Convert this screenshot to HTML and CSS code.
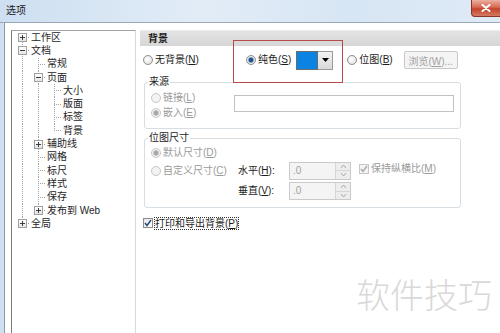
FILE: index.html
```html
<!DOCTYPE html>
<html>
  <head>
    <meta charset="utf-8">
    <title>选项</title>
    <link rel="stylesheet" href="styles.css">
  </head>
  <body>
    <div class="window">
      <!-- 標題列 -->
      <div class="titlebar">
        <span class="title">选项</span>
        <span class="close">
          <svg width="10" height="8" viewBox="0 0 10 8"><path d="M1.5 1 L8.5 7 M8.5 1 L1.5 7" stroke="#fff" stroke-width="2" stroke-linecap="round"/></svg>
        </span>
      </div>

      <div class="frame">
        <div class="client">
          <!-- 左邊的樹狀清單 -->
          <div class="tree">
            <div class="node"><i class="g f"><b class="box plus"></b></i><span>工作区</span></div>
            <div class="node"><i class="g t"><b class="box"></b></i><span>文档</span></div>
            <div class="node"><i class="g v"></i><i class="g t"></i><span>常规</span></div>
            <div class="node"><i class="g v"></i><i class="g t"><b class="box"></b></i><span>页面</span></div>
            <div class="node"><i class="g v"></i><i class="g v"></i><i class="g t"></i><span>大小</span></div>
            <div class="node"><i class="g v"></i><i class="g v"></i><i class="g t"></i><span>版面</span></div>
            <div class="node"><i class="g v"></i><i class="g v"></i><i class="g t"></i><span>标签</span></div>
            <div class="node"><i class="g v"></i><i class="g v"></i><i class="g l"></i><span>背景</span></div>
            <div class="node"><i class="g v"></i><i class="g t"><b class="box plus"></b></i><span>辅助线</span></div>
            <div class="node"><i class="g v"></i><i class="g t"></i><span>网格</span></div>
            <div class="node"><i class="g v"></i><i class="g t"></i><span>标尺</span></div>
            <div class="node"><i class="g v"></i><i class="g t"></i><span>样式</span></div>
            <div class="node"><i class="g v"></i><i class="g t"></i><span>保存</span></div>
            <div class="node"><i class="g v"></i><i class="g l"><b class="box plus"></b></i><span>发布到 Web</span></div>
            <div class="node"><i class="g l"><b class="box plus"></b></i><span>全局</span></div>
          </div>

          <!-- 右邊的設定頁 -->
          <div class="pane">
            <div class="pane-head">背景</div>

            <div class="top-row">
              <span class="opt"><i class="radio"></i><span>无背景(<u>N</u>)</span></span>
              <span class="opt solid"><i class="radio on"></i><span>纯色(<u>S</u>)</span></span>
              <span class="picker">
                <span class="swatch"></span>
                <span class="drop">
                  <svg width="7" height="4" viewBox="0 0 7 4"><path d="M0 0 H7 L3.5 4 Z" fill="#000"/></svg>
                </span>
              </span>
              <span class="opt bitmap"><i class="radio"></i><span>位图(<u>B</u>)</span></span>
              <span class="btn"><span>浏览(<u>W</u>)...</span></span>
            </div>

            <fieldset class="group source">
              <legend>来源</legend>
              <div class="source-body">
                <div class="source-opts">
                  <span class="opt dim"><i class="radio dis"></i><span>链接(<u>L</u>)</span></span>
                  <span class="opt dim"><i class="radio dis on"></i><span>嵌入(<u>E</u>)</span></span>
                </div>
                <span class="path"></span>
              </div>
            </fieldset>

            <fieldset class="group size">
              <legend>位图尺寸</legend>
              <div class="size-grid">
                <span class="opt dim"><i class="radio dis on"></i><span>默认尺寸(<u>D</u>)</span></span>
                <span></span><span></span><span></span>

                <span class="opt dim"><i class="radio dis"></i><span>自定义尺寸(<u>C</u>)</span></span>
                <span class="lbl">水平(<u>H</u>):</span>
                <span class="spin"><span class="val">.0</span><span class="arrows"><b><svg width="5" height="3" viewBox="0 0 5 3"><path d="M0 3 L2.5 0 L5 3" fill="none" stroke="#a8a8a8"/></svg></b><b><svg width="5" height="3" viewBox="0 0 5 3"><path d="M0 0 L2.5 3 L5 0" fill="none" stroke="#a8a8a8"/></svg></b></span></span>
                <span class="opt dim keep"><i class="check dis"><svg width="8" height="8" viewBox="0 0 8 8"><path d="M1 4 L3 6.5 L7 1" fill="none" stroke="#a5a5a5" stroke-width="1.3"/></svg></i><span>保持纵横比(<u>M</u>)</span></span>

                <span></span>
                <span class="lbl">垂直(<u>V</u>):</span>
                <span class="spin"><span class="val">.0</span><span class="arrows"><b><svg width="5" height="3" viewBox="0 0 5 3"><path d="M0 3 L2.5 0 L5 3" fill="none" stroke="#a8a8a8"/></svg></b><b><svg width="5" height="3" viewBox="0 0 5 3"><path d="M0 0 L2.5 3 L5 0" fill="none" stroke="#a8a8a8"/></svg></b></span></span>
                <span></span>
              </div>
            </fieldset>

            <div class="print">
              <i class="check"><svg width="8" height="8" viewBox="0 0 8 8"><path d="M1 4 L3 6.5 L7 1" fill="none" stroke="#23457a" stroke-width="1.4"/></svg></i>
              <span class="focus">打印和导出背景(<u>P</u>)</span>
            </div>
          </div>
        </div>
      </div>

      <!-- 標記框和浮水印 -->
      <div class="highlight"></div>
      <div class="mark">软件技巧</div>
    </div>
  </body>
</html>
```

FILE: styles.css
```css
/* 整體視窗 */
body {
  margin: 0;
  width: 500px;
  height: 333px;
  overflow: hidden;
  font-family: "Liberation Sans", "Noto Sans CJK SC", sans-serif;
  font-size: 10px;
  color: #1c1c1c;
}

u {
  text-decoration: underline;
  text-underline-offset: 1px;
}

.window {
  position: relative;
  width: 500px;
  height: 333px;
  display: flex;
  flex-direction: column;
  background: #cfe0f2;
}

/* 標題列 */
.titlebar {
  height: 22px;
  flex: none;
  display: flex;
  align-items: flex-start;
  background: linear-gradient(to right, #cddff1, #e2ecf7 40%, #d7e6f4 70%, #dfeaf6);
  border-bottom: 1px solid #9aa8b8;
}

.title {
  margin: 5px 0 0 6px;
  font-size: 10px;
  line-height: 12px;
  color: #1a1a1a;
}

.close {
  margin-left: auto;
  width: 28px;
  height: 16px;
  display: flex;
  align-items: center;
  justify-content: center;
  border: 1px solid #8a3527;
  border-top: 0;
  border-right: 0;
  border-radius: 0 0 0 4px;
  background: linear-gradient(#eab0a2, #d66a52 45%, #c2432a 55%, #d37a62);
}

.frame {
  flex: 1;
  display: flex;
  padding-left: 4px;
}

.client {
  flex: 1;
  display: flex;
  gap: 4px;
  padding: 7px 0 0 6px;
  background: #fff;
  border-left: 1px solid #8e9aa8;
}

/* 樹狀清單 */
.tree {
  width: 121px;
  flex: none;
  padding-left: 2px;
  background: #fff;
  border: 1px solid #a3a3a3;
  border-left-color: #7e7e7e;
  border-right-color: #dadada;
  border-bottom: 0;
}

.node {
  height: 13.3px;
  display: flex;
  align-items: center;
  line-height: 12px;
  white-space: nowrap;
}

.node span {
  padding-left: 1px;
  color: #262626;
}

.g {
  width: 16px;
  height: 100%;
  flex: none;
  display: flex;
  align-items: center;
  justify-content: center;
  background-repeat: no-repeat;
}

.g.v {
  background-image: repeating-linear-gradient(to bottom, #a5a5a5 0 1px, transparent 1px 2px);
  background-size: 1px 100%;
  background-position: 8px 0;
}

.g.t {
  background-image:
    repeating-linear-gradient(to bottom, #a5a5a5 0 1px, transparent 1px 2px),
    repeating-linear-gradient(to right, #a5a5a5 0 1px, transparent 1px 2px);
  background-size: 1px 100%, 8px 1px;
  background-position: 8px 0, 8px 50%;
}

.g.l {
  background-image:
    repeating-linear-gradient(to bottom, #a5a5a5 0 1px, transparent 1px 2px),
    repeating-linear-gradient(to right, #a5a5a5 0 1px, transparent 1px 2px);
  background-size: 1px 50%, 8px 1px;
  background-position: 8px 0, 8px 50%;
}

.g.f {
  background-image:
    repeating-linear-gradient(to bottom, #a5a5a5 0 1px, transparent 1px 2px),
    repeating-linear-gradient(to right, #a5a5a5 0 1px, transparent 1px 2px);
  background-size: 1px 50%, 8px 1px;
  background-position: 8px 100%, 8px 50%;
}

.box {
  width: 9px;
  height: 9px;
  box-sizing: border-box;
  margin-left: 1px;
  border: 1px solid #a0a0a0;
  background:
    linear-gradient(#3b3b3b, #3b3b3b) center / 5px 1px no-repeat,
    linear-gradient(#fff, #e4e4e4);
}

.box.plus {
  background:
    linear-gradient(#3b3b3b, #3b3b3b) center / 5px 1px no-repeat,
    linear-gradient(#3b3b3b, #3b3b3b) center / 1px 5px no-repeat,
    linear-gradient(#fff, #e4e4e4);
}

/* 右邊的設定頁 */
.pane {
  flex: 1;
  display: flex;
  flex-direction: column;
  align-items: flex-start;
}

.pane-head {
  align-self: stretch;
  height: 16px;
  box-sizing: border-box;
  padding-left: 8px;
  line-height: 16px;
  font-weight: bold;
  background: linear-gradient(#e3e3e3, #d6d6d6);
  border-top: 1px solid #ececec;
}

.opt {
  display: flex;
  align-items: center;
  gap: 2px;
  white-space: nowrap;
  line-height: 12px;
}

.opt.dim {
  color: #9a9a9a;
}

.radio {
  width: 10px;
  height: 10px;
  box-sizing: border-box;
  flex: none;
  border: 1px solid #8d8d8d;
  border-radius: 50%;
  background: radial-gradient(circle at 40% 40%, #fff, #dadada);
}

.radio.on {
  background: radial-gradient(circle, #24548a 0 2px, #86abd0 2.6px, #ececec 3.4px);
}

.radio.dis {
  border-color: #c6c6c6;
  background: #f3f3f3;
}

.radio.dis.on {
  background: radial-gradient(circle, #a6a6a6 0 2px, #cfcfcf 2.6px, #f3f3f3 3.4px);
}

.check {
  width: 10px;
  height: 10px;
  box-sizing: border-box;
  flex: none;
  display: flex;
  align-items: center;
  justify-content: center;
  border: 1px solid #8d8d8d;
  background: linear-gradient(135deg, #e6e6e6, #fff);
}

.check.dis {
  border-color: #c6c6c6;
  background: #f4f4f4;
}

.top-row {
  height: 20px;
  margin-top: 4px;
  padding-left: 3px;
  display: flex;
  align-items: center;
}

.opt.solid {
  margin-left: 47px;
}

.picker {
  margin-left: 5px;
  display: flex;
  height: 19px;
}

.swatch {
  width: 22px;
  box-sizing: border-box;
  background: #0b83e2;
  border: 1px solid #6c6c6c;
}

.drop {
  width: 14px;
  display: flex;
  align-items: center;
  justify-content: center;
  background: linear-gradient(#f2f2f2, #d9d9d9);
  border: 1px solid #9a9a9a;
  border-left: 0;
}

.opt.bitmap {
  margin-left: 14px;
}

.btn {
  margin-left: 11px;
  width: 54px;
  height: 18px;
  box-sizing: border-box;
  display: flex;
  align-items: center;
  justify-content: center;
  color: #a3a3a3;
  background: #f4f4f4;
  border: 1px solid #c8c8c8;
  border-radius: 2px;
}

/* 分組框 */
.group {
  width: 317px;
  box-sizing: border-box;
  margin: 6px 0 0 4px;
  padding: 0 6px;
  border: 1px solid #d6dde3;
  border-radius: 3px;
}

.group legend {
  padding: 0 1px;
  margin-left: -3px;
  line-height: 12px;
  color: #1c1c1c;
}

.source {
  padding-bottom: 8px;
}

.source-body {
  display: flex;
  padding-top: 2px;
}

.source-opts {
  width: 83px;
  display: flex;
  flex-direction: column;
}

.source-opts .opt {
  height: 15px;
}

.path {
  margin-top: 5px;
  width: 220px;
  height: 17px;
  box-sizing: border-box;
  background: #fff;
  border: 1px solid #c2c2c2;
}

.size {
  margin-top: 3px;
  padding-bottom: 6px;
}

.size-grid {
  display: grid;
  grid-template-columns: 87px 51px 62px auto;
  grid-template-rows: 14px 21px 20px;
  align-items: center;
  padding-top: 2px;
}

.lbl {
  white-space: nowrap;
  line-height: 12px;
}

.spin {
  height: 18px;
  box-sizing: border-box;
  display: flex;
  background: #f4f4f4;
  border: 1px solid #cacaca;
}

.val {
  flex: 1;
  padding-left: 3px;
  line-height: 16px;
  color: #a0a0a0;
}

.arrows {
  width: 14px;
  display: flex;
  flex-direction: column;
  border-left: 1px solid #d6d6d6;
}

.arrows b {
  flex: 1;
  display: flex;
  align-items: center;
  justify-content: center;
  background: #ededed;
}

.arrows b + b {
  border-top: 1px solid #d6d6d6;
}

.keep {
  margin-left: 8px;
  align-self: start;
  margin-top: 3px;
}

.print {
  margin-top: 9px;
  padding-left: 3px;
  height: 12px;
  display: flex;
  align-items: center;
  gap: 2px;
}

.focus {
  outline: 1px dotted #333;
  line-height: 11px;
  white-space: nowrap;
}

/* 紅色標記框，疊在畫面上 */
.highlight {
  position: absolute;
  left: 233px;
  top: 40px;
  width: 110px;
  height: 43px;
  box-sizing: border-box;
  border: 1px solid #b6494a;
}

/* 浮水印 */
.mark {
  position: absolute;
  left: 356px;
  top: 274px;
  font-family: "Noto Sans CJK SC", sans-serif;
  font-size: 34px;
  line-height: 40px;
  color: #d9d9d9;
  font-weight: 300;
}
```
